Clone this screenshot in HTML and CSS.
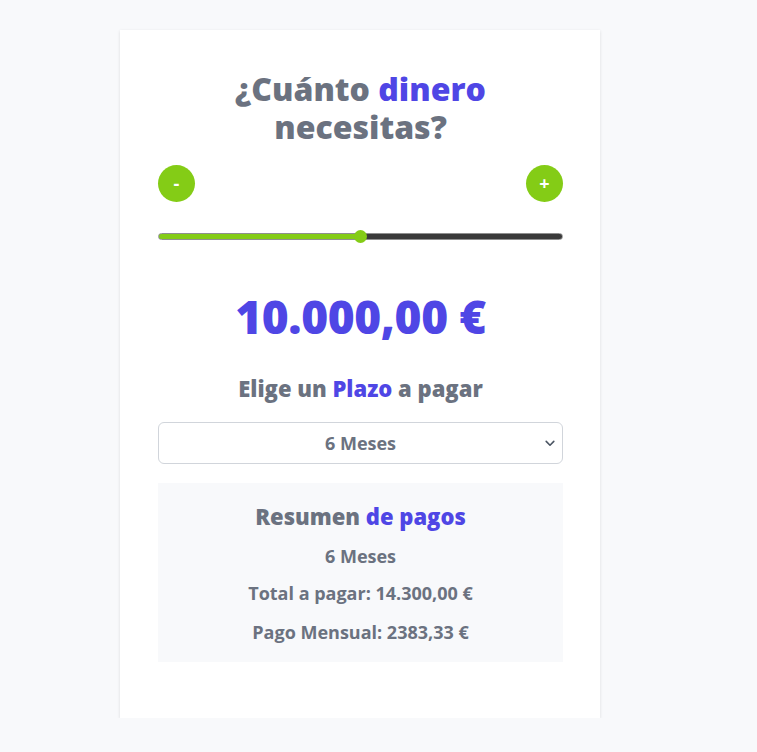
FILE: index.html
```html
<!DOCTYPE html>
<html lang="es">
<head>
<meta charset="utf-8">
<title>Simulador de préstamo</title>
<link rel="stylesheet" href="styles.css">
</head>
<body>
<main class="card">
  <h1 class="title">¿Cuánto <span class="accent">dinero</span> necesitas?</h1>
  <div class="controls">
    <button class="round-btn" type="button">-</button>
    <button class="round-btn" type="button">+</button>
  </div>
  <div class="slider-wrap">
    <input class="slider" type="range" min="0" max="20000" value="10000" style="--fill: 50%">
  </div>
  <p class="amount">10.000,00 €</p>
  <h2 class="subtitle">Elige un <span class="accent">Plazo</span> a pagar</h2>
  <div class="select-wrap">
    <select class="term">
      <option>6 Meses</option>
      <option>12 Meses</option>
      <option>24 Meses</option>
    </select>
    <svg class="chev" width="10" height="7" viewBox="0 0 10 7"><path d="M1.2 1.4 L5 5.2 L8.8 1.4" fill="none" stroke="#4b5563" stroke-width="1.6" stroke-linecap="round" stroke-linejoin="round"/></svg>
  </div>
  <section class="summary">
    <h3 class="summary-title">Resumen <span class="accent">de pagos</span></h3>
    <p class="summary-line">6 Meses</p>
    <p class="summary-line">Total a pagar: 14.300,00 €</p>
    <p class="summary-line">Pago Mensual: 2383,33 €</p>
  </section>
</main>
</body>
</html>
```
FILE: styles.css
```css
* { box-sizing: border-box; }
html, body { margin: 0; padding: 0; }
body {
  background: #f8f9fb;
  font-family: "Open Sans", "Noto Sans", sans-serif;
  color: #6b7280;
  padding: 30px 0 0 120px;
}
.card {
  width: 480px;
  background: #ffffff;
  box-shadow: 0 1px 3px rgba(0,0,0,0.12);
  padding: 40px 37px 56px 38px;
  display: flex;
  flex-direction: column;
}
.accent { color: #4f46e5; }
.title {
  margin: 0;
  font-size: 32px;
  line-height: 38px;
  font-weight: 800;
  text-align: center;
  padding: 0 60px;
  letter-spacing: 0;
}
.controls {
  margin-top: 19px;
  display: flex;
  justify-content: space-between;
}
.round-btn {
  width: 37px;
  height: 37px;
  border-radius: 50%;
  border: none;
  background: #84cc16;
  color: #ffffff;
  font-family: "Open Sans", sans-serif;
  font-weight: 700;
  font-size: 18px;
  line-height: 1;
  padding: 0 0 2px;
  display: flex;
  align-items: center;
  justify-content: center;
}
.slider-wrap {
  margin-top: 24px;
  height: 20px;
  display: flex;
  align-items: center;
}
.slider {
  -webkit-appearance: none;
  appearance: none;
  width: 100%;
  margin: 0;
  height: 7px;
  border-radius: 4px;
  border: 1px solid #8f8f8f;
  background: linear-gradient(to right, #84cc16 0, #84cc16 var(--fill), #3a3a3a var(--fill), #3a3a3a 100%);
  outline: none;
}
.slider::-webkit-slider-thumb {
  -webkit-appearance: none;
  appearance: none;
  width: 13px;
  height: 13px;
  border-radius: 50%;
  background: #84cc16;
  border: none;
}
.amount {
  margin: 41px 0 0;
  text-align: center;
  font-size: 46px;
  line-height: 58px;
  font-weight: 800;
  color: #4f46e5;
  letter-spacing: -0.4px;
}
.subtitle {
  margin: 27px 0 0;
  text-align: center;
  font-size: 22px;
  line-height: 33px;
  font-weight: 800;
  letter-spacing: 0;
}
.select-wrap {
  position: relative;
  margin-top: 17px;
}
.term {
  -webkit-appearance: none;
  appearance: none;
  width: 100%;
  height: 42px;
  border: 1px solid #d1d5db;
  border-radius: 6px;
  background: #ffffff;
  text-align: center;
  text-align-last: center;
  font-family: "Open Sans", sans-serif;
  font-size: 18px;
  font-weight: 700;
  color: #6b7280;
}
.chev {
  position: absolute;
  right: 8px;
  top: 18px;
  pointer-events: none;
}
.summary {
  margin-top: 19px;
  background: #f8f9fb;
  padding: 17px 0 16px;
  text-align: center;
}
.summary-title {
  margin: 0;
  font-size: 22px;
  line-height: 33px;
  font-weight: 800;
  letter-spacing: 0;
}
.summary-line {
  margin: 10px 0 0;
  font-size: 18px;
  line-height: 27px;
  font-weight: 700;
}
.summary-line + .summary-line { margin-top: 10px; }
.summary-line:last-child { margin-top: 12px; }
```
